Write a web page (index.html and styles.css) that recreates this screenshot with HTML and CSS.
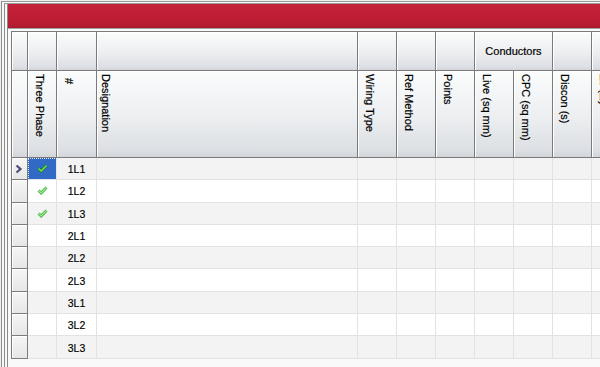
FILE: index.html
```html
<!DOCTYPE html>
<html lang="en">
<head>
  <meta charset="UTF-8">
  <title>Circuits</title>
  <link rel="stylesheet" href="styles.css">
</head>
<body>
  <div class="shell">
    <div class="frame">
      <div class="pane">
        <div class="titlebar"></div>
        <div class="gridwrap">
          <div class="grid">
            <!-- bands -->
            <div class="band">
              <div class="hc"></div><div class="hc"></div><div class="hc"></div><div class="hc"></div>
              <div class="hc"></div><div class="hc"></div><div class="hc"></div>
              <div class="hc group">Conductors</div>
              <div class="hc"></div><div class="hc"></div>
            </div>
            <!-- columns -->
            <div class="cols">
              <div class="hc"></div>
              <div class="hc"><span class="vt">Three Phase</span></div>
              <div class="hc"><span class="vt">#</span></div>
              <div class="hc tight"><span class="vt">Designation</span></div>
              <div class="hc"><span class="vt">Wiring Type</span></div>
              <div class="hc"><span class="vt">Ref Method</span></div>
              <div class="hc"><span class="vt">Points</span></div>
              <div class="hc"><span class="vt">Live (sq mm)</span></div>
              <div class="hc"><span class="vt">CPC (sq mm)</span></div>
              <div class="hc"><span class="vt">Discon (s)</span></div>
              <div class="hc"><span class="vt">Zs (&Omega;)</span></div>
            </div>

            <div class="rows">
              <div class="row">
                <div class="rh"><svg width="8" height="10" viewBox="0 0 8 10"><polyline points="1.5,1.5 5.5,5 1.5,8.5" fill="none" stroke="#4d4d78" stroke-width="2.2"/></svg></div>
                <div class="c sel"><svg class="tick" width="11" height="9" viewBox="0 0 11 9"><polyline points="1.5,4.5 4.2,7 9.5,1.5" fill="none" stroke="#1f7d1f" stroke-width="2.8"/><polyline points="1.5,4.5 4.2,7 9.5,1.5" fill="none" stroke="#6ee35e" stroke-width="1.3"/></svg></div>
                <div class="c num">1L1</div>
                <div class="c"></div><div class="c"></div><div class="c"></div><div class="c"></div><div class="c"></div><div class="c"></div><div class="c"></div><div class="c"></div>
              </div>
              <div class="row">
                <div class="rh"></div>
                <div class="c"><svg class="tick" width="11" height="9" viewBox="0 0 11 9"><polyline points="1.5,4.5 4.2,7 9.5,1.5" fill="none" stroke="#3fae3f" stroke-width="2.8"/><polyline points="1.5,4.5 4.2,7 9.5,1.5" fill="none" stroke="#9af08c" stroke-width="1.2"/></svg></div>
                <div class="c num">1L2</div>
                <div class="c"></div><div class="c"></div><div class="c"></div><div class="c"></div><div class="c"></div><div class="c"></div><div class="c"></div><div class="c"></div>
              </div>
              <div class="row">
                <div class="rh"></div>
                <div class="c"><svg class="tick" width="11" height="9" viewBox="0 0 11 9"><polyline points="1.5,4.5 4.2,7 9.5,1.5" fill="none" stroke="#3fae3f" stroke-width="2.8"/><polyline points="1.5,4.5 4.2,7 9.5,1.5" fill="none" stroke="#9af08c" stroke-width="1.2"/></svg></div>
                <div class="c num">1L3</div>
                <div class="c"></div><div class="c"></div><div class="c"></div><div class="c"></div><div class="c"></div><div class="c"></div><div class="c"></div><div class="c"></div>
              </div>
              <div class="row">
                <div class="rh"></div><div class="c"></div><div class="c num">2L1</div>
                <div class="c"></div><div class="c"></div><div class="c"></div><div class="c"></div><div class="c"></div><div class="c"></div><div class="c"></div><div class="c"></div>
              </div>
              <div class="row">
                <div class="rh"></div><div class="c"></div><div class="c num">2L2</div>
                <div class="c"></div><div class="c"></div><div class="c"></div><div class="c"></div><div class="c"></div><div class="c"></div><div class="c"></div><div class="c"></div>
              </div>
              <div class="row">
                <div class="rh"></div><div class="c"></div><div class="c num">2L3</div>
                <div class="c"></div><div class="c"></div><div class="c"></div><div class="c"></div><div class="c"></div><div class="c"></div><div class="c"></div><div class="c"></div>
              </div>
              <div class="row">
                <div class="rh"></div><div class="c"></div><div class="c num">3L1</div>
                <div class="c"></div><div class="c"></div><div class="c"></div><div class="c"></div><div class="c"></div><div class="c"></div><div class="c"></div><div class="c"></div>
              </div>
              <div class="row">
                <div class="rh"></div><div class="c"></div><div class="c num">3L2</div>
                <div class="c"></div><div class="c"></div><div class="c"></div><div class="c"></div><div class="c"></div><div class="c"></div><div class="c"></div><div class="c"></div>
              </div>
              <div class="row">
                <div class="rh"></div><div class="c"></div><div class="c num">3L3</div>
                <div class="c"></div><div class="c"></div><div class="c"></div><div class="c"></div><div class="c"></div><div class="c"></div><div class="c"></div><div class="c"></div>
              </div>
            </div>
          </div>
        </div>
      </div>
    </div>
  </div>
</body>
</html>
```

FILE: styles.css
```css
:root {
  --cols: 16px 29px 40px 261px 39px 39px 39px 39px 39px 39px 80px;
  --hline: #7a7a7a;
  --gline: #e2e2e2;
}
html, body {
  margin: 0;
  height: 100%;
  overflow: hidden;
}
body {
  font-family: "Liberation Sans", Arial, sans-serif;
  font-size: 11px;
  color: #000;
  background: #eeeeee;
}
.shell {
  box-sizing: border-box;
  height: 100%;
  margin-left: 1px;
  border-top: 1px solid #9a9a9a;
  border-left: 1px solid #8c8c8c;
  padding: 1px 0 0 2px;
  background: #f7f7f7;
  position: relative;
  top: 1px;
}
.frame {
  height: 100%;
  border-top: 1px solid #9a9a9a;
  border-left: 1px solid #8c8c8c;
  padding-left: 2px;
}
.pane {
  height: 100%;
  border-left: 1px solid #8c8c8c;
  display: flex;
  flex-direction: column;
}
.titlebar {
  height: 23px;
  flex: none;
  background: linear-gradient(#c4203a, #bd1d34 70%, #b11b2f);
  border-bottom: 1px solid #a41a2c;
}
.gridwrap {
  flex: 1;
  border-top: 1px solid #a3a3a3;
  padding: 2px 0 0 3px;
  background: #f9f9f9;
  overflow: hidden;
}
.grid {
  border-top: 1px solid var(--hline);
  border-left: 1px solid var(--hline);
  width: max-content;
}

/* header */
.band, .cols {
  display: grid;
  grid-template-columns: var(--cols);
}
.band {
  height: 39px;
}
.cols {
  height: 87px;
}
.hc {
  box-sizing: border-box;
  border-right: 1px solid var(--hline);
  border-bottom: 1px solid var(--hline);
  background: linear-gradient(#fbfcfc, #eceef0 55%, #dcdfe3 92%, #d2d5da);
  box-shadow: inset 1px 1px #ffffff;
  padding: 3px 0 0 6px;
  overflow: hidden;
  -webkit-text-stroke: 0.2px #000;
}
.hc.tight {
  padding-left: 3px;
}
.band .group {
  grid-column: span 2;
  display: flex;
  align-items: center;
  justify-content: center;
  padding: 0 0 1px;
}
.vt {
  writing-mode: vertical-rl;
  line-height: 12px;
  white-space: nowrap;
}

/* body rows */
.rows {
  display: grid;
  grid-auto-rows: 22.3px;
}
.row {
  display: grid;
  grid-template-columns: var(--cols);
}
.row:nth-child(odd) .c {
  background: #f3f3f3;
}
.row:nth-child(even) .c {
  background: #ffffff;
}
.c {
  box-sizing: border-box;
  border-right: 1px solid var(--gline);
  border-bottom: 1px solid var(--gline);
  display: flex;
  align-items: center;
  justify-content: center;
}
.num {
  font-size: 10.5px;
  color: #000;
  padding-top: 1px;
  -webkit-text-stroke: 0.15px #000;
}
.rh {
  box-sizing: border-box;
  border-right: 1px solid #7c7c7c;
  border-bottom: 1px solid #7c7c7c;
  background: linear-gradient(#f6f6f6, #e6e6e6);
  box-shadow: inset 1px 1px #ffffff;
  display: flex;
  align-items: center;
  justify-content: center;
  padding-right: 2px;
}
.rows .row .c.sel {
  background: #316ac5;
  outline: 1px dotted #dfe7f7;
  outline-offset: -1px;
}
.tick {
  display: block;
  margin-left: 1px;
}
```
